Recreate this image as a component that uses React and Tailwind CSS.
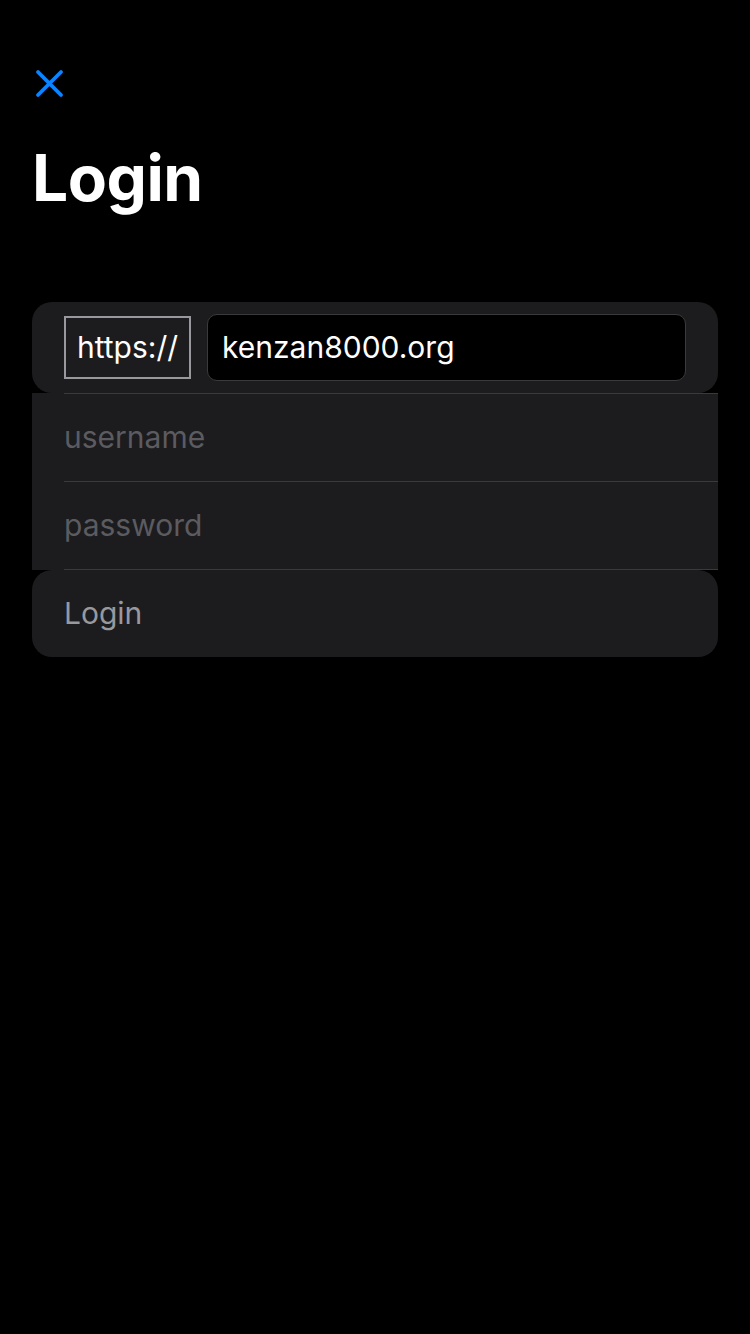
export default function App() {
  return (
    <div className="min-h-[1334px] w-[750px] bg-black font-['Inter',sans-serif] text-white">
      <div className="px-8 pt-[68px]">
        <button className="flex h-[32px] w-[36px] items-center justify-start">
          <svg width="32" height="32" viewBox="0 0 32 32" fill="none" className="ml-[1px]">
            <path d="M5 4 L28 27 M28 4 L5 27" stroke="#0a84ff" strokeWidth="3.8" strokeLinecap="round" />
          </svg>
        </button>
        <h1 className="mt-[42px] text-[64px] font-bold leading-[72px] tracking-[-0.5px]">Login</h1>
      </div>

      <div className="mx-8 mt-[88px]">
        <div className="flex h-[91px] items-center gap-[16px] rounded-[20px] bg-[#1c1c1e] pl-8 pr-8">
          <div className="flex h-[63px] w-[127px] items-center justify-center border-2 border-[#98989d] text-[30px]">
            https://
          </div>
          <div className="flex h-[67px] flex-1 items-center rounded-[10px] border border-[#3a3a3c] bg-black px-[14px] text-[30px]">
            kenzan8000.org
          </div>
        </div>
        <div className="bg-[#1c1c1e]">
          <div className="ml-8 flex h-[88px] items-center border-t border-[#3a3a3c] text-[30px] text-[#5b5b60]">
            username
          </div>
          <div className="ml-8 flex h-[88px] items-center border-t border-[#3a3a3c] text-[30px] text-[#5b5b60]">
            password
          </div>
          <div className="ml-8 border-t border-[#3a3a3c]" />
        </div>
        <div className="flex h-[87px] items-center rounded-[20px] bg-[#1c1c1e] pl-8 text-[30px] text-[#98989f]">
          Login
        </div>
      </div>
    </div>
  )
}
